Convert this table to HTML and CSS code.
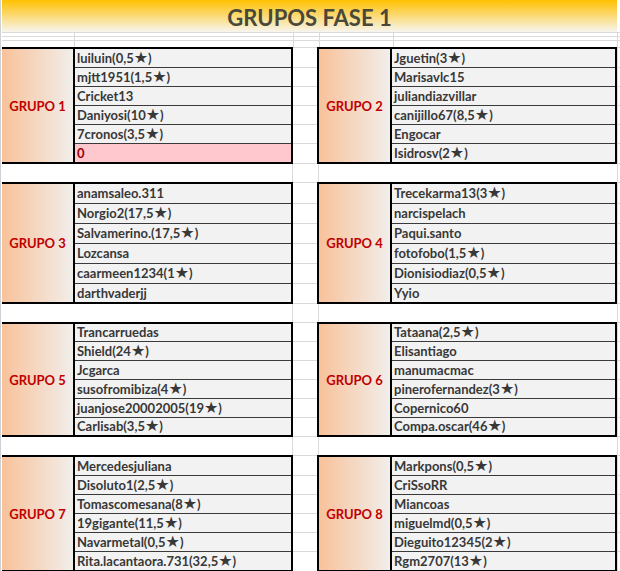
FILE: index.html
```html
<!DOCTYPE html>
<html lang="es">
<head>
<meta charset="utf-8">
<title>Grupos Fase 1</title>
<link rel="stylesheet" href="styles.css">
</head>
<body>
<div class="sheet">
  <div class="title-row"><div class="title">GRUPOS FASE 1</div></div>
  <div class="pad"></div>

  <div class="band">
    <div class="grp grp-l">
      <div class="label">GRUPO 1</div>
      <ul class="names">
        <li>luiluin(0,5<span class="st">★</span>)</li>
        <li>mjtt1951(1,5<span class="st">★</span>)</li>
        <li>Cricket13</li>
        <li>Daniyosi(10<span class="st">★</span>)</li>
        <li>7cronos(3,5<span class="st">★</span>)</li>
        <li class="bad">0</li>
      </ul>
    </div>
    <ul class="gap"><li></li><li></li><li></li><li></li><li></li><li></li></ul>
    <div class="grp grp-r">
      <div class="label">GRUPO 2</div>
      <ul class="names">
        <li>Jguetin(3<span class="st">★</span>)</li>
        <li>Marisavlc15</li>
        <li>juliandiazvillar</li>
        <li>canijillo67(8,5<span class="st">★</span>)</li>
        <li>Engocar</li>
        <li>Isidrosv(2<span class="st">★</span>)</li>
      </ul>
    </div>
    <ul class="edge"><li></li><li></li><li></li><li></li><li></li><li></li></ul>
  </div>

  <div class="blank"><span></span><span></span><span></span></div>

  <div class="band tall">
    <div class="grp grp-l">
      <div class="label">GRUPO 3</div>
      <ul class="names">
        <li>anamsaleo.311</li>
        <li>Norgio2(17,5<span class="st">★</span>)</li>
        <li>Salvamerino.(17,5<span class="st">★</span>)</li>
        <li>Lozcansa</li>
        <li>caarmeen1234(1<span class="st">★</span>)</li>
        <li>darthvaderjj</li>
      </ul>
    </div>
    <ul class="gap"><li></li><li></li><li></li><li></li><li></li><li></li></ul>
    <div class="grp grp-r">
      <div class="label">GRUPO 4</div>
      <ul class="names">
        <li>Trecekarma13(3<span class="st">★</span>)</li>
        <li>narcispelach</li>
        <li>Paqui.santo</li>
        <li>fotofobo(1,5<span class="st">★</span>)</li>
        <li>Dionisiodiaz(0,5<span class="st">★</span>)</li>
        <li>Yyio</li>
      </ul>
    </div>
    <ul class="edge"><li></li><li></li><li></li><li></li><li></li><li></li></ul>
  </div>

  <div class="blank"><span></span><span></span><span></span></div>

  <div class="band short">
    <div class="grp grp-l">
      <div class="label">GRUPO 5</div>
      <ul class="names">
        <li>Trancarruedas</li>
        <li>Shield(24<span class="st">★</span>)</li>
        <li>Jcgarca</li>
        <li>susofromibiza(4<span class="st">★</span>)</li>
        <li>juanjose20002005(19<span class="st">★</span>)</li>
        <li>Carlisab(3,5<span class="st">★</span>)</li>
      </ul>
    </div>
    <ul class="gap"><li></li><li></li><li></li><li></li><li></li><li></li></ul>
    <div class="grp grp-r">
      <div class="label">GRUPO 6</div>
      <ul class="names">
        <li>Tataana(2,5<span class="st">★</span>)</li>
        <li>Elisantiago</li>
        <li>manumacmac</li>
        <li>pinerofernandez(3<span class="st">★</span>)</li>
        <li>Copernico60</li>
        <li>Compa.oscar(46<span class="st">★</span>)</li>
      </ul>
    </div>
    <ul class="edge"><li></li><li></li><li></li><li></li><li></li><li></li></ul>
  </div>

  <div class="blank"><span></span><span></span><span></span></div>

  <div class="band">
    <div class="grp grp-l">
      <div class="label">GRUPO 7</div>
      <ul class="names">
        <li>Mercedesjuliana</li>
        <li>Disoluto1(2,5<span class="st">★</span>)</li>
        <li>Tomascomesana(8<span class="st">★</span>)</li>
        <li>19gigante(11,5<span class="st">★</span>)</li>
        <li>Navarmetal(0,5<span class="st">★</span>)</li>
        <li>Rita.lacantaora.731(32,5<span class="st">★</span>)</li>
      </ul>
    </div>
    <ul class="gap"><li></li><li></li><li></li><li></li><li></li><li></li></ul>
    <div class="grp grp-r">
      <div class="label">GRUPO 8</div>
      <ul class="names">
        <li>Markpons(0,5<span class="st">★</span>)</li>
        <li>CriSsoRR</li>
        <li>Miancoas</li>
        <li>miguelmd(0,5<span class="st">★</span>)</li>
        <li>Dieguito12345(2<span class="st">★</span>)</li>
        <li>Rgm2707(13<span class="st">★</span>)</li>
      </ul>
    </div>
    <ul class="edge"><li></li><li></li><li></li><li></li><li></li><li></li></ul>
  </div>
</div>
</body>
</html>
```
FILE: styles.css
```css
* { box-sizing: border-box; margin: 0; padding: 0; }
html, body { background: #ffffff; }
body {
  width: 620px;
  height: 571px;
  overflow: hidden;
  font-family: Lato, "Open Sans", sans-serif;
}
.sheet {
  width: 620px;
  border-left: 1px solid #cdd1d6;
  padding-left: 1px;
  display: flex;
  flex-direction: column;
}
.title-row { display: flex; }
.title {
  width: 615px;
  height: 32px;
  background: linear-gradient(#ffc000, #f7f5ef);
  display: flex;
  align-items: center;
  justify-content: center;
  font-weight: 700;
  font-size: 22px;
  line-height: 32px;
  color: #4a4838;
  padding-top: 3px;
}
.pad {
  height: 15px;
  background:
    linear-gradient(#dadada, #dadada) 0 0 / 100% 1px no-repeat,
    linear-gradient(#dadada, #dadada) 0 4px / 100% 1px no-repeat,
    linear-gradient(#dadada, #dadada) 0 8px / 100% 1px no-repeat,
    linear-gradient(#dadada, #dadada) 72px 0 / 1px 100% no-repeat,
    linear-gradient(#dadada, #dadada) 291px 0 / 1px 100% no-repeat,
    linear-gradient(#dadada, #dadada) 317px 0 / 1px 100% no-repeat,
    linear-gradient(#dadada, #dadada) 391px 0 / 1px 100% no-repeat,
    linear-gradient(#dadada, #dadada) 615px 0 / 1px 100% no-repeat;
}
.band { display: flex; align-items: stretch; }
.grp { display: flex; border: 2px solid #000; }
.grp-l { width: 291px; border-left: none; }
.grp-r { width: 300px; }
.label {
  width: 73px;
  flex: none;
  background: linear-gradient(90deg, #f8c29a, #f1eeeb);
  border-right: 2px solid #000;
  display: flex;
  align-items: center;
  justify-content: center;
  color: #c00000;
  font-weight: 700;
  font-size: 13px;
}
ul { list-style: none; }
.names { flex: 1; background: #f2f2f2; }
.names li {
  height: 19px;
  line-height: 18px;
  border-bottom: 1px solid #3a3a3a;
  padding-left: 2px;
  font-weight: 700;
  font-size: 13px;
  color: #383838;
  white-space: nowrap;
}
.names li:last-child { border-bottom: none; height: 18px; }
.names li.bad { background: #ffc7ce; color: #9c0006; }
.st {
  font-family: "DejaVu Sans", sans-serif;
  font-weight: 400;
  font-size: 16px;
  line-height: 0;
  color: #383838;
}
.gap, .edge {
  border-top: 1px solid #dadada;
  border-bottom: 1px solid #dadada;
  padding: 1px 0;
}
.gap { width: 24px; }
.edge { width: 3px; border-left: 1px solid #dadada; }
.gap li, .edge li { height: 19px; border-bottom: 1px solid #dadada; }
.gap li:last-child, .edge li:last-child { height: 18px; border-bottom: none; }

.band.tall .names li, .band.tall .gap li, .band.tall .edge li { height: 20px; line-height: 19px; }
.band.tall li:last-child { height: 18px; line-height: 18px; }
.band.short li:first-child { height: 18px; line-height: 17px; }
.band.short li:last-child { height: 17px; line-height: 17px; }

.blank { height: 18px; display: flex; }
.blank span { display: block; height: 100%; border-right: 1px solid #dadada; }
.blank span:nth-child(1) { width: 291px; }
.blank span:nth-child(2) { width: 26px; }
.blank span:nth-child(3) { width: 299px; }
```
